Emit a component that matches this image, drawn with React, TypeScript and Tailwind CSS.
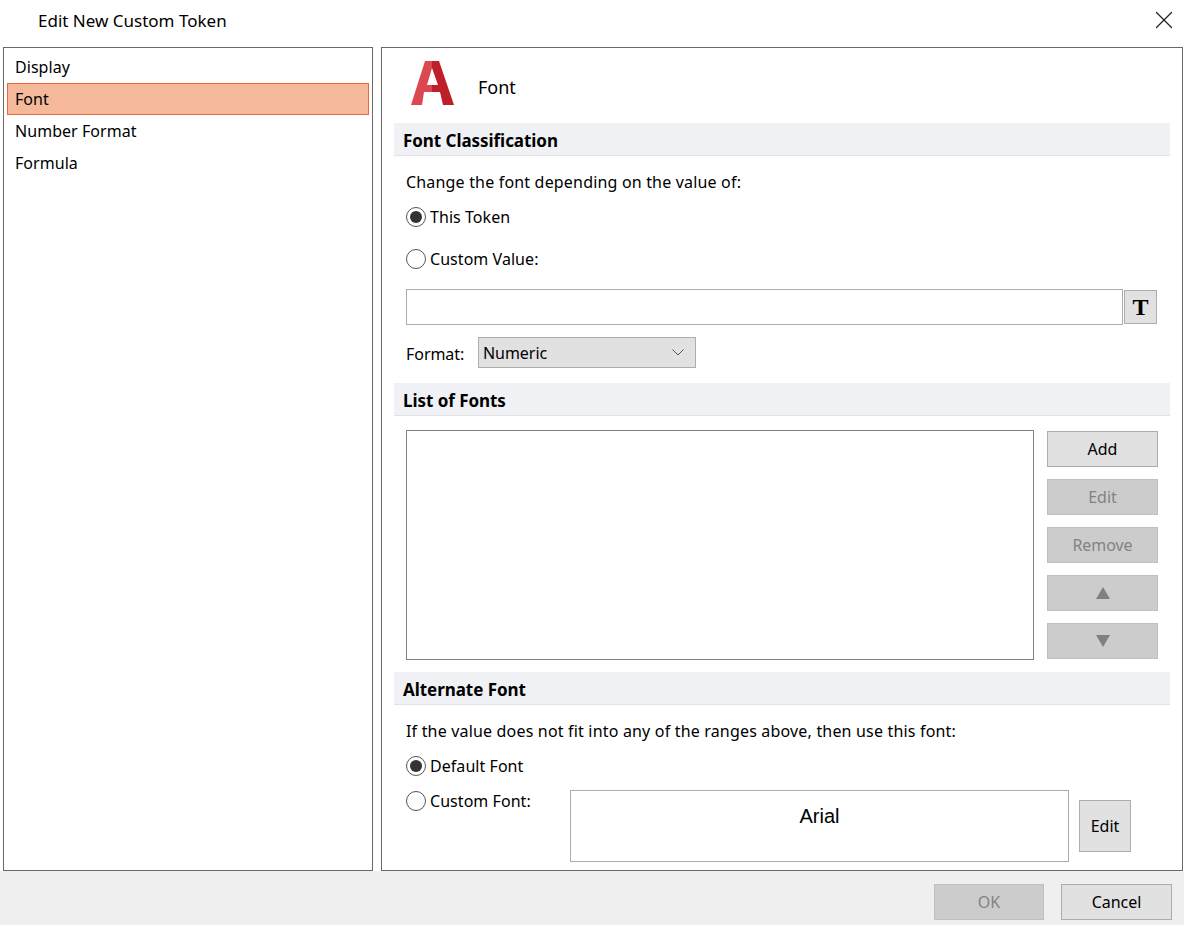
import { X } from "lucide-react"

const NAV_ITEMS = ["Display", "Font", "Number Format", "Formula"]

function SectionBar({ title }: { title: string }) {
    return (
        <div className="h-[33px] bg-[#f0f1f5] border-b border-[#e1e2e5] pl-[9px] pt-[2px] flex items-center">
            <span className="font-bold text-[17px] text-black leading-none">{title}</span>
        </div>
    )
}

function Radio({ label, checked = false }: { label: string; checked?: boolean }) {
    return (
        <div className="flex items-center gap-[4px]">
            <span className="w-[20px] h-[20px] rounded-full border border-[#555] flex items-center justify-center bg-white">
                {checked && <span className="w-[12px] h-[12px] rounded-full bg-[#333]" />}
            </span>
            <span className="leading-none tracking-[0.05px]">{label}</span>
        </div>
    )
}

function SideButton({ children, disabled = false }: { children: React.ReactNode; disabled?: boolean }) {
    return (
        <div className={`w-[111px] h-[36px] border flex items-center justify-center ${
            disabled
                ? "bg-[#cccccc] border-[#bfbfbf] text-[#838383]"
                : "bg-[#e1e1e1] border-[#adadad] text-black"
        }`}>
            {children}
        </div>
    )
}

function LogoA() {
    return (
        <svg width="43" height="44" viewBox="0 0 43 44">
            <path d="M0 44 L14 0 H21 V7 L16 24 H21 V31 H13 L11 44 Z" fill="#dc4850" />
            <path d="M21 0 H28 L43 44 H32 L29 31 H21 V24 H27 L21 7 Z" fill="#bf1f29" />
        </svg>
    )
}

export default function App() {
    return (
        <div className="w-[1184px] h-[925px] bg-white flex flex-col overflow-hidden text-[16px] text-black font-['Noto_Sans',sans-serif] tracking-[-0.05px]">
            <div className="h-[47px] shrink-0 flex items-center justify-between pl-[38px] pr-[5px] pb-[5px]">
                <span className="text-[17px] tracking-normal">Edit New Custom Token</span>
                <X className="w-[30px] h-[30px] mb-[3px] text-[#222]" strokeWidth={1} />
            </div>

            <div className="h-[824px] shrink-0 flex pl-[3px] gap-[8px]">
                <div className="w-[370px] border border-[#696969] pt-[3px] px-[3px]">
                    {NAV_ITEMS.map((item) => (
                        <div
                            key={item}
                            className={`h-[32px] pl-[7px] flex items-center border tracking-[0.05px] ${
                                item === "Font" ? "bg-[#f5b89b] border-[#f0653c]" : "border-transparent"
                            }`}
                        >
                            {item}
                        </div>
                    ))}
                </div>

                <div className="w-[802px] border border-[#696969] px-[12px]">
                    <div className="h-[75px] flex items-start pl-[17px] pt-[13px] gap-[24px]">
                        <LogoA />
                        <span className="text-[18px] mt-[14px] leading-[25px]">Font</span>
                    </div>

                    <SectionBar title="Font Classification" />
                    <div className="pl-[12px] pr-[13px]">
                        <div className="h-[22px] mt-[15px] flex items-center tracking-[0.18px]">Change the font depending on the value of:</div>
                        <div className="mt-[14px]"><Radio label="This Token" checked /></div>
                        <div className="mt-[22px]"><Radio label="Custom Value:" /></div>
                        <div className="mt-[20px] flex items-center gap-[1px]">
                            <div className="w-[717px] h-[36px] border border-[#ababab] bg-white" />
                            <div className="w-[33px] h-[34px] border border-[#adadad] bg-[#e1e1e1] flex items-center justify-center font-['Liberation_Serif',serif] font-bold text-[24px] leading-none">
                                T
                            </div>
                        </div>
                        <div className="mt-[12px] flex items-center">
                            <span className="w-[72px] pt-[3px]">Format:</span>
                            <div className="w-[218px] h-[31px] border border-[#adadad] bg-[#e1e1e1] pl-[4px] pr-[11px] flex items-center justify-between">
                                <span>Numeric</span>
                                <svg width="12" height="7" viewBox="0 0 12 7" fill="none">
                                    <path d="M0.5 0.5 L6 6 L11.5 0.5" stroke="#555" strokeWidth="1" />
                                </svg>
                            </div>
                        </div>
                    </div>

                    <div className="mt-[15px]"><SectionBar title="List of Fonts" /></div>
                    <div className="pl-[12px] mt-[14px] flex gap-[13px]">
                        <div className="w-[628px] h-[230px] border border-[#7f7f85] bg-white" />
                        <div className="flex flex-col gap-[12px] pt-[1px]">
                            <SideButton>Add</SideButton>
                            <SideButton disabled>Edit</SideButton>
                            <SideButton disabled>Remove</SideButton>
                            <SideButton disabled>
                                <svg width="14" height="12" viewBox="0 0 14 12"><path d="M7 0 L14 12 H0 Z" fill="#808080" /></svg>
                            </SideButton>
                            <SideButton disabled>
                                <svg width="14" height="12" viewBox="0 0 14 12"><path d="M0 0 H14 L7 12 Z" fill="#808080" /></svg>
                            </SideButton>
                        </div>
                    </div>

                    <div className="mt-[12px]"><SectionBar title="Alternate Font" /></div>
                    <div className="pl-[12px]">
                        <div className="h-[22px] mt-[15px] flex items-center tracking-[0.18px]">If the value does not fit into any of the ranges above, then use this font:</div>
                        <div className="mt-[14px]"><Radio label="Default Font" checked /></div>
                        <div className="mt-[4px] flex">
                            <div className="w-[164px] pt-[11px]"><Radio label="Custom Font:" /></div>
                            <div className="mt-[10px] w-[499px] h-[72px] border border-[#ababab] bg-white flex justify-center pt-[13px] font-['Liberation_Sans',sans-serif] text-[20px] tracking-normal leading-[24px]">
                                Arial
                            </div>
                            <div className="ml-[10px] mt-[20px] w-[52px] h-[52px] border border-[#adadad] bg-[#e1e1e1] flex items-center justify-center">
                                Edit
                            </div>
                        </div>
                    </div>
                </div>
            </div>

            <div className="flex-1 bg-[#efefef] flex items-start justify-end gap-[17px] pt-[13px] pr-[12px]">
                <div className="w-[110px] h-[36px] border border-[#bfbfbf] bg-[#cccccc] text-[#838383] flex items-center justify-center">OK</div>
                <div className="w-[111px] h-[36px] border border-[#adadad] bg-[#e1e1e1] flex items-center justify-center">Cancel</div>
            </div>
        </div>
    )
}
